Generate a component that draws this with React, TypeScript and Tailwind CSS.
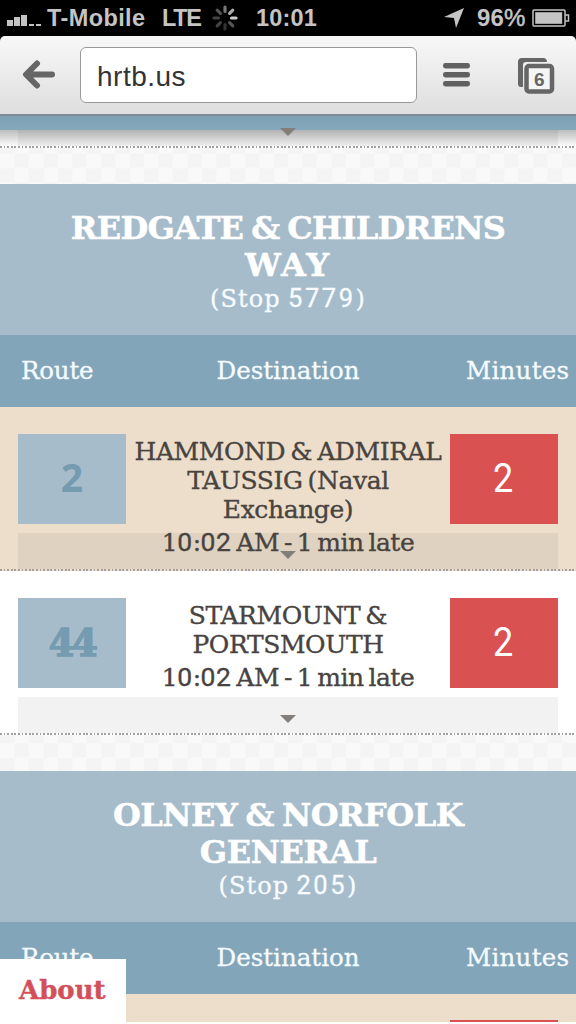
import React from "react";

const slab = "font-['DejaVu_Serif',serif] [font-stretch:normal]";

/* Round numerals are set in a plain face, letters and "1" in the slab face. */
function Mixed({ text, spaced }: { text: string; spaced?: boolean }) {
  return (
    <>
      {text.split(/([02-9]+)/).map((part, i) =>
        /^[02-9]+$/.test(part) ? (
          <span key={i} className={`font-['Roboto',sans-serif] text-[1.06em] ${spaced ? "tracking-[0.1em]" : "tracking-[0.02em]"}`}>{part}</span>
        ) : (
          <React.Fragment key={i}>{part}</React.Fragment>
        ),
      )}
    </>
  );
}

function StatusBar() {
  return (
    <div className="flex h-9 shrink-0 items-center bg-black font-['Liberation_Sans',sans-serif] text-2xl leading-9 font-bold text-[#c4c4c4]">
      <svg className="mt-1 ml-[7px] h-3 w-[35px]" viewBox="0 0 35 12" fill="#c4c4c4">
        <rect x="0" y="6" width="6" height="6" /><rect x="7" y="3" width="6" height="9" />
        <rect x="14" y="1" width="6" height="11" /><rect x="22" y="10" width="5" height="2" />
        <rect x="29" y="10" width="5" height="2" />
      </svg>
      <span className="ml-[5px] w-[99px] whitespace-nowrap text-[23.5px] tracking-[0.4px]">T-Mobile</span>
      <span className="ml-[16px] w-10 text-[23.5px] tracking-[-1.3px]">LTE</span>
      <svg className="ml-[10px] h-[26px] w-[26px]" viewBox="-13 -13 26 26" strokeWidth="3.2" strokeLinecap="round">
        {["#777", "#aaa", "#ccc", "#555", "#333", "#444", "#444", "#555"].map((c, i) => (
          <line key={i} x1="0" y1="-6.5" x2="0" y2="-11" stroke={c} transform={`rotate(${i * 45})`} />
        ))}
      </svg>
      <span className="ml-[18px] w-[62px] text-[23.5px] tracking-[0.2px]">10:01</span>
      <svg className="ml-[126px] h-5 w-5" viewBox="0 0 20 20" fill="#c4c4c4"><path d="M20 0 12 20 10 10 0 9Z" /></svg>
      <span className="ml-[13px] w-[49px] text-[24px] tracking-[0.2px]">96<span className="font-normal [-webkit-text-stroke:0.5px_#c4c4c4]">%</span></span>
      <svg className="ml-[6px] h-[18px] w-[38px]" viewBox="0 0 38 18" fill="none" stroke="#c4c4c4" strokeWidth="1.5">
        <rect x="1" y="1" width="32" height="16" rx="1" />
        <rect x="3.2" y="3.2" width="27" height="11.6" fill="#c4c4c4" stroke="none" />
        <path d="M33 6h3.5v6H33" />
      </svg>
    </div>
  );
}

function Toolbar() {
  return (
    <div className="bg-black">
      <div className="flex h-20 items-start rounded-t-[5px] border-b-2 border-[#7f8c94] bg-linear-to-b from-[#f8f8f8] to-[#dedede]">
        <svg className="mt-6 ml-[22px] h-[30px] w-[34px]" viewBox="0 0 34 30" fill="none" stroke="#666" strokeWidth="6" strokeLinecap="round" strokeLinejoin="round">
          <path d="M30 14.5H5M15 3.5 4 14.5l11 11" />
        </svg>
        <div className="mt-[11px] ml-6 h-14 w-[337px] rounded-md border border-[#999] bg-white pl-4 font-['Liberation_Sans',sans-serif] text-[28px] leading-[57px] tracking-[0.5px] text-[#333]">
          hrtb.us
        </div>
        <svg className="mt-[26px] ml-[26px] h-[25px] w-7" viewBox="0 0 28 25" fill="#606060">
          <rect x="0" y="1" width="27" height="5.4" rx="2.4" /><rect x="0" y="10" width="27" height="5.4" rx="2.4" /><rect x="0" y="19" width="27" height="5.4" rx="2.4" />
        </svg>
        <svg className="mt-[21px] ml-[46px] h-[38px] w-[38px]" viewBox="0 0 38 38">
          <path d="M4 30a3 3 0 0 1-3-3V5a4 4 0 0 1 4-4h21a4 4 0 0 1 4 4H9a3 3 0 0 0-3 3V30Z" fill="#666" />
          <rect x="9.5" y="9" width="25.500" height="25.500" rx="2.500" fill="#f5f5f5" stroke="#666" strokeWidth="4.500" />
          <text x="22.300" y="28.800" textAnchor="middle" fill="#666" className="font-['Liberation_Sans',sans-serif] text-[19px] font-bold">6</text>
        </svg>
      </div>
    </div>
  );
}

const dotted = "h-0.5 shrink-0 bg-[repeating-linear-gradient(90deg,#a0a0a0_0_1.8px,transparent_1.8px_3.6px)]";

function Gap({ offset }: { offset: string }) {
  return (
    <div className={`h-9 shrink-0 bg-[#f9f9f9] bg-[conic-gradient(#f4f4f4_25%,#f9f9f9_0_50%,#f4f4f4_0_75%,#f9f9f9_0)] bg-[size:28.8px_28.8px] ${offset}`} />
  );
}

function Arrow() {
  return <div className="h-2 w-4 bg-[#827e7a] [clip-path:polygon(0_0,100%_0,50%_100%)]" />;
}

function StopHeader({ lines, stop }: { lines: { text: string; tracking: string }[]; stop: string }) {
  return (
    <>
      <div className={`${slab} h-[151px] shrink-0 bg-[#a6bccb] pt-[26px] text-center text-white`}>
        {lines.map((l) => (
          <div key={l.text} className={`h-[37px] text-[32px] leading-[37px] font-bold whitespace-nowrap [-webkit-text-stroke:0.5px_white] [word-spacing:-0.08em] ${l.tracking}`}>{l.text}</div>
        ))}
        <div className="h-[28px] text-[24px] leading-[28px] tracking-[1.1px] text-[#f8fcff] [-webkit-text-stroke:0.3px_#f8fcff] [word-spacing:-0.06em]"><Mixed spaced text={`(Stop ${stop})`} /></div>
      </div>
      <div className={`${slab} flex h-[72px] shrink-0 items-center bg-[#82a5b9] pt-px text-[24.5px] text-[#f5fbff] [-webkit-text-stroke:0.3px_#f5fbff]`}>
        <div className="w-[126px] pl-[21px] tracking-[-0.2px]">Route</div>
        <div className="w-[324px] text-center">Destination</div>
        <div className="flex-1 pl-4 tracking-[0.3px]">Minutes</div>
      </div>
    </>
  );
}

function Route({ route, lines, time, minutes, shaded }: { route: string; lines: string[]; time: string; minutes: string; shaded?: boolean }) {
  return (
    <div className={`flex h-[164px] shrink-0 flex-col ${shaded ? "bg-[#ecdecb]" : "bg-white"}`}>
      <div className="mt-[27px] flex h-[90px] px-[18px]">
        <div className={`flex w-[108px] items-center justify-center bg-[#a6bccb] font-bold text-[#749bb0] ${route.length > 1 ? `${slab} pt-px text-[37px] tracking-[-2.5px] [-webkit-text-stroke:1.5px_#749bb0]` : "pb-1 font-['Open_Sans',sans-serif] text-[39px]"}`}>
          {route}
        </div>
        <div className={`${slab} z-1 flex-1 pt-[3px] text-center text-[25px] leading-[29px] whitespace-nowrap text-[#48433f] [-webkit-text-stroke:0.35px_#48433f] [word-spacing:-0.1em]`}>
          {lines.map((l) => <div key={l} className="tracking-[-0.4px]">{l}</div>)}
          <div className="mt-[3px] h-[29px] tracking-[-0.5px]"><Mixed text={time} /></div>
        </div>
        <div className="flex w-[108px] items-center justify-center bg-[#da5151] pr-0.5 font-['Roboto',sans-serif] text-[40px] text-white"><span className="scale-x-90">{minutes}</span></div>
      </div>
      <div className="mx-[18px] mt-[9px] flex h-9 justify-center bg-black/5 pt-[18px]"><Arrow /></div>
      <div className={dotted} />
    </div>
  );
}

export default function App() {
  return (
    <div className="relative flex h-[1024px] w-[576px] flex-col overflow-hidden bg-white">
      <StatusBar />
      <Toolbar />
      <div className="h-[14px] shrink-0 bg-linear-to-b from-[#7fa0b4] to-[#84a8bc]" />
      <div className="h-4 shrink-0 bg-linear-to-b from-[#bdbdbd] to-[#fcfcfc] px-[18px]">
        <div className="flex h-4 justify-center bg-black/5"><div className="-mt-0.5"><Arrow /></div></div>
      </div>
      <div className={dotted} />
      <Gap offset="bg-[position:0px_5.6px]" />
      <StopHeader lines={[{ text: "REDGATE & CHILDRENS", tracking: "tracking-[-0.7px]" }, { text: "WAY", tracking: "tracking-[2px]" }]} stop="5779" />
      <Route route="2" lines={["HAMMOND & ADMIRAL", "TAUSSIG (Naval", "Exchange)"]} time="10:02 AM - 1 min late" minutes="2" shaded />
      <Route route="44" lines={["STARMOUNT &", "PORTSMOUTH"]} time="10:02 AM - 1 min late" minutes="2" />
      <Gap offset="bg-[position:0px_8.3px]" />
      <StopHeader lines={[{ text: "OLNEY & NORFOLK", tracking: "tracking-[-0.5px]" }, { text: "GENERAL", tracking: "tracking-[-0.4px]" }]} stop="205" />
      <div className="flex h-7 shrink-0 items-end justify-end bg-[#ecdecb] pr-[18px]"><div className="h-0.5 w-[108px] bg-[#da5151]" /></div>
      <div className={`${slab} absolute bottom-0 left-0 z-10 h-[65px] w-[126px] bg-white pl-[19px] text-[26px] leading-[63px] font-bold text-[#d3505a] [-webkit-text-stroke:0.4px_#d3505a]`}>About</div>
    </div>
  );
}
